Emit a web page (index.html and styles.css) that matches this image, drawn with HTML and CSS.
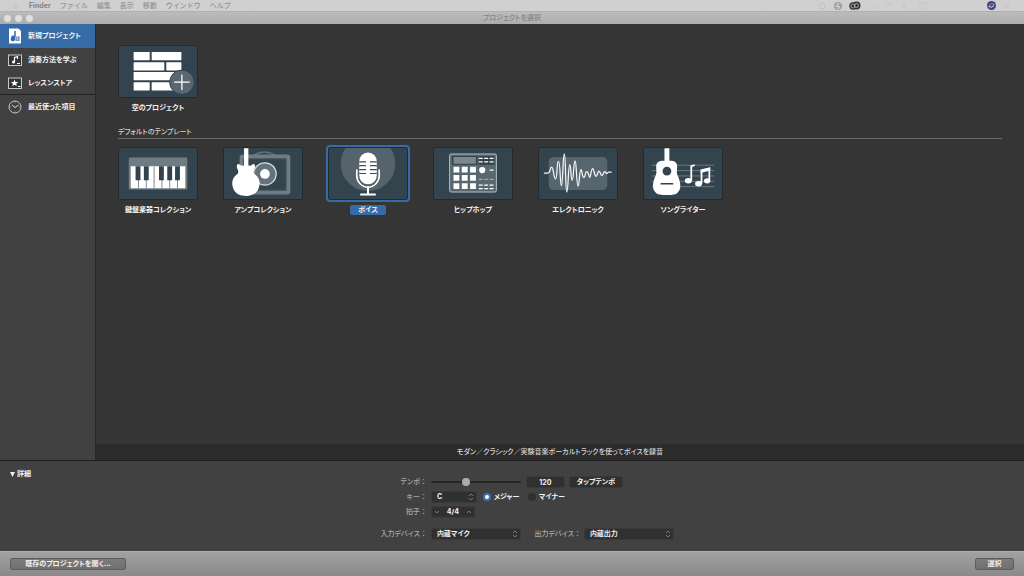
FILE: index.html
```html
<!DOCTYPE html>
<html lang="ja">
<head>
<meta charset="utf-8">
<title>プロジェクトを選択</title>
<link rel="stylesheet" href="styles.css">
</head>
<body>
<header class="menubar">
  <nav class="menus">
    <svg class="apple" viewBox="0 0 8 8"><path d="M4 2.4C2 1.5.8 3 1.2 5S3 7.800 4 7.100s2 .4 2.700-1.600C5.600 5 5.600 3.500 6.500 2.900 5.700 2 4.800 2.200 4 2.400zM4 2c0-1 .6-1.600 1.300-1.700C5.400 1.200 4.800 2 4 2z"/></svg>
    <b>Finder</b><span>ファイル</span><span>編集</span><span>表示</span><span>移動</span><span>ウインドウ</span><span>ヘルプ</span>
  </nav>
  <svg class="status" viewBox="0 0 200 11">
    <circle cx="8" cy="6" r="3" fill="none" stroke="#c2c2c2"/>
    <circle cx="24" cy="6" r="4" fill="#a2a2a2"/><path d="M24.500 3l-2 3.500h3L24 9" fill="none" stroke="#ddd"/>
    <circle cx="39" cy="6" r="3.700" fill="#333"/><circle cx="42.500" cy="5.500" r="4" fill="#333"/><circle cx="39" cy="6" r="2" fill="none" stroke="#bbb" stroke-width=".8"/><circle cx="42.500" cy="5.500" r="2" fill="none" stroke="#bbb" stroke-width=".8"/>
    <g fill="none" stroke="#c8c8c8"><path d="M58 3v6M62 3v6M71 4q3.500-2 7 0M72.500 6q2-1.500 4 0M91 4l-3 2 3 2z"/><rect x="105" y="3" width="7" height="6"/><path d="M124 6h3M129 6h4M136 6h3M141 6h3M158 4l4 4"/></g>
    <circle cx="177.500" cy="5.500" r="4.500" fill="#344b80"/><path d="M174.500 7q2-5 6-2" fill="none" stroke="#c3609f" stroke-width="1.200"/><path d="M175 6.500q3 2 5-1" fill="none" stroke="#cdf" stroke-width="1"/>
    <path d="M190 4h6M190 6h6M190 8h6" stroke="#cbc8c6"/>
  </svg>
</header>

<div class="titlebar">
  <div class="lights"><i></i><i></i><i></i></div>
  <h1>プロジェクトを選択</h1>
</div>

<div class="body">
  <aside class="sidebar">
    <button class="side selected">
      <svg viewBox="0 0 16 16"><path d="M2 .5h9.500L14 3v12.500H2z" fill="#fff"/><path d="M8 3v6" stroke="#2f69a8" stroke-width="1.500"/><path d="M6.500 7.500C4 7 4.500 9.500 3.800 10.500S4.500 14 7 13s1.500-5-.5-5.500z" fill="#2f69a8"/><path d="M9 8.500h3.500V13H8.500z" fill="#5b8bc0"/><path d="M10.300 9v3.500" stroke="#fff" stroke-width=".7"/></svg>
      新規プロジェクト</button>
    <button class="side">
      <svg viewBox="0 0 16 16"><rect x="1.500" y="3" width="13" height="10.500" fill="#353535" stroke="#c8c8c8"/><path d="M7.500 10V5.500l3-1V7" fill="none" stroke="#fff" stroke-width="1.200"/><circle cx="6.500" cy="10" r="1.500" fill="#fff"/><path d="M10 11.500h3" stroke="#fff"/></svg>
      演奏方法を学ぶ</button>
    <button class="side">
      <svg viewBox="0 0 16 16"><rect x="1.500" y="3" width="13" height="10.500" fill="#353535" stroke="#c8c8c8"/><path d="M7.500 4.500l1 2.500 2.700.1-2.100 1.600.8 2.600-2.400-1.500-2.300 1.500.8-2.600-2.100-1.600L6.600 7z" fill="#fff"/><path d="M11 11.500h2.500" stroke="#fff"/></svg>
      レッスンストア</button>
    <button class="side recent">
      <svg viewBox="0 0 16 16"><circle cx="8" cy="8" r="6" fill="none" stroke="#c8c8c8"/><path d="M5 6l3 2.500L11.500 6" fill="none" stroke="#ddd"/><path d="M8 2.500v1M8 12.500v1M2.500 8h1M12.500 8h1" stroke="#aaa"/></svg>
      最近使った項目</button>
  </aside>

  <main class="content">
    <div class="chooser">
      <div class="tiles">
        <button class="tile">
          <svg viewBox="0 0 80 52"><g fill="#fff"><rect x="15" y="6" width="16.500" height="8.500" rx=".5"/><rect x="33.500" y="6" width="30.500" height="8.500" rx=".5"/><rect x="15" y="16.500" width="31.500" height="8.500" rx=".5"/><rect x="48.500" y="16.500" width="15.500" height="8.500" rx=".5"/><rect x="15" y="26.500" width="49" height="8.500" rx=".5"/><rect x="15" y="37" width="16.500" height="8.500" rx=".5"/><rect x="33.500" y="37" width="25" height="8.500" rx=".5"/></g><circle cx="64.500" cy="37" r="12.500" fill="#596870" stroke="#34434d"/><path d="M56.500 37h16M64.500 29v16" stroke="#fff" stroke-width="1.300"/></svg>
          <span>空のプロジェクト</span></button>
      </div>
      <h2>デフォルトのテンプレート</h2>
      <div class="tiles">
        <button class="tile">
          <svg viewBox="0 0 80 52"><rect x="10" y="9.500" width="60" height="33" rx="1.500" fill="#6f7c83"/><path d="M12 18.500h56V41H12z" fill="#fff"/><path d="M20 19v22M28 19v22M36 19v22M44 19v22M52 19v22M60 19v22" stroke="#5c6b74" stroke-width=".8"/><path d="M17 18.500h5V33h-5zM25.500 18.500h5V33h-5zM41 18.500h5V33h-5zM49.500 18.500h5V33h-5zM57.500 18.500h5V33h-5z" fill="#33434d"/></svg>
          <span>鍵盤楽器コレクション</span></button>
        <button class="tile">
          <svg viewBox="0 0 80 52"><path d="M31 7q10-6 21 0" fill="none" stroke="#61717b" stroke-width="1.500"/><rect x="18" y="8.500" width="48" height="37" rx="1" fill="none" stroke="#6e7c84" stroke-width="4"/><rect x="20.500" y="11" width="43" height="32" fill="none" stroke="#46565f"/><circle cx="42" cy="26.500" r="11.500" fill="#63727b" stroke="#d4dade" stroke-width="1.300"/><circle cx="42" cy="26.500" r="5" fill="#fff"/><path d="M20.500 0h4.500v17c0 2 3 1 4.500-.5 2-1 3 2 2 4-1.500 3-2 5 1 7 5 3.500 5 11 2 16-2.500 4-7 5.500-12 5.500s-9.500-1.500-12-5.500c-3-5-3-12.500 2-16 3-2 2.500-4 1-7-1-2 0-5 2-4 2 1.500 5 2.500 5 .5z" fill="#fff"/></svg>
          <span>アンプコレクション</span></button>
        <button class="tile chosen">
          <svg viewBox="0 0 80 52"><circle cx="40" cy="16" r="28" fill="#56636b"/><path d="M28.500 22v6a11.500 12 0 0 0 23 0v-6" fill="none" stroke="#fff" stroke-width="1.700"/><rect x="31" y="4.500" width="18" height="32.500" rx="9" fill="#fff"/><path d="M31 14h7M31 18h7M31 22h7M31 26h7M42 14h7M42 18h7M42 22h7M42 26h7" stroke="#3a4a54" stroke-width="1.200"/><path d="M40 40v7M32 47.500h16" stroke="#fff" stroke-width="2"/></svg>
          <span>ボイス</span></button>
        <button class="tile">
          <svg viewBox="0 0 80 52"><rect x="16" y="6" width="48" height="39" rx="1.500" fill="#596870" stroke="#b8c0c4"/><path d="M18.500 8h26v9h-26zM46 8h16v9H46z" fill="#33434d"/><path d="M20 9h23v7H20z" fill="#7b888f"/><path d="M20 19h6v6h-6zM28.500 19h6v6h-6zM37 19h6v6h-6zM20 27.500h6v6h-6zM28.500 27.500h6v6h-6zM37 27.500h6v6h-6zM20 36h6v6h-6zM28.500 36h6v6h-6zM37 36h6v6h-6z" fill="#fff"/><circle cx="49.500" cy="22.500" r="3.200" fill="#fff"/><path d="M57 22.500h4M46 10.500h4M51.500 10.500h4M57 10.500h4M46 14h4M51.500 14h4M57 14h4M46 38h4M51.500 38h4M57 38h4M46 41.500h4M51.500 41.500h4M57 41.500h4" stroke="#fff" stroke-width="1.300"/><path d="M46 32h4M51.500 32h4M57 32h4" stroke="#9ca7ad" stroke-width="1.200"/></svg>
          <span>ヒップホップ</span></button>
        <button class="tile">
          <svg viewBox="0 0 80 52"><rect x="10" y="9" width="60" height="34" rx="5" fill="#56656e"/><path d="M5 25.500h4c3 0 2-6 4-6s2 12 4 12 1-18 3-18 1.500 25 3 25S24.500 6 26 6s1 39 2.500 39S30 17 31.500 17s1 16 2.500 16 1.500-20 3-20 1.500 26 3 26 1.500-17 3-17 1 8 3 8 1-6 3-6 2 6 3 6 1.500-9 3-9 2 8 3.500 8 1.500-5.500 3-5.500 1.500 4.500 3 4.500 1.500-4 3-4 1 2 2 2 1-1.500 2-1.500h3" fill="none" stroke="#f4f6f7" stroke-width="1.300"/></svg>
          <span>エレクトロニック</span></button>
        <button class="tile">
          <svg viewBox="0 0 80 52"><path d="M8 17.500h64M8 23h64M8 28.500h64M8 34h64M8 39.500h64" stroke="#71808a" stroke-width=".9"/><path d="M21 0h5v13c6 0 8 2 8 6 0 5-1 6 1 10 3 7 3 13 0 16-2 3-6 3-11.500 3s-10 0-12-3c-3-3-3-9 0-16 2-4 1-5 1-10 0-4 2-6 8.500-6z" fill="#fff"/><circle cx="23.500" cy="23.500" r="4.500" fill="#34434d"/><path d="M17 36.500h13" stroke="#34434d" stroke-width="1.500"/><path d="M48.500 33V18.500l3.500-1M59 36V23l8-2v12" fill="none" stroke="#fff" stroke-width="1.800"/><path d="M58.100 22l9.800-2.500v3.500l-9.800 2.500z" fill="#fff"/><g fill="#fff"><ellipse cx="45.500" cy="33.500" rx="3.600" ry="2.800"/><ellipse cx="56" cy="36.500" rx="3.600" ry="2.800"/><ellipse cx="64.800" cy="33.500" rx="3.300" ry="2.700"/></g></svg>
          <span>ソングライター</span></button>
      </div>
    </div>
    <p class="caption">モダン／クラシック／実験音楽ボーカルトラックを使ってボイスを録音</p>
  </main>
</div>

<section class="details">
  <button class="disclosure"><svg viewBox="0 0 6 6"><path d="M0 0h6L3 6z" fill="#eee"/></svg>詳細</button>
  <form class="form">
    <label for="tempo">テンポ<span class="colon">：</span></label>
    <div class="row">
      <input id="tempo" class="slider" type="range" min="0" max="100" value="38">
      <input class="number" type="text" value="120" aria-label="テンポ値">
      <button type="button" class="btn">タップテンポ</button>
    </div>
    <label for="key">キー<span class="colon">：</span></label>
    <div class="row">
      <div class="pick key"><select id="key"><option>C</option></select><svg viewBox="0 0 6 8"><path d="M1 3l2-2 2 2M1 5l2 2 2-2"/></svg></div>
      <label class="radio"><input type="radio" name="mode" checked>メジャー</label>
      <label class="radio"><input type="radio" name="mode">マイナー</label>
    </div>
    <label for="meter">拍子<span class="colon">：</span></label>
    <div class="row">
      <div class="stepper">
        <button type="button" aria-label="前"><svg viewBox="0 0 6 8"><path d="M1 3l2 2 2-2"/></svg></button>
        <input id="meter" type="text" value="4/4">
        <button type="button" aria-label="次"><svg viewBox="0 0 6 8"><path d="M1 5l2-2 2 2"/></svg></button>
      </div>
    </div>
    <label for="in" class="device">入力デバイス<span class="colon">：</span></label>
    <div class="row device">
      <div class="pick"><select id="in"><option>内蔵マイク</option></select><svg viewBox="0 0 6 8"><path d="M1 3l2-2 2 2M1 5l2 2 2-2"/></svg></div>
      <label for="out" class="outlabel">出力デバイス<span class="colon">：</span></label>
      <div class="pick"><select id="out"><option>内蔵出力</option></select><svg viewBox="0 0 6 8"><path d="M1 3l2-2 2 2M1 5l2 2 2-2"/></svg></div>
    </div>
  </form>
</section>

<footer class="footer">
  <button class="open">既存のプロジェクトを開く...</button>
  <button class="choose">選択</button>
</footer>
</body>
</html>
```

FILE: styles.css
```css
* { box-sizing: border-box; }

body {
  margin: 0;
  min-height: 100vh;
  display: flex;
  flex-direction: column;
  background: #353535;
  color: #f2f2f2;
  font: 500 7px/10px Inter, "Noto Sans CJK JP", sans-serif;
  font-feature-settings: "palt";
}

button, input, select {
  margin: 0;
  padding: 0;
  border: 0;
  background: none;
  color: inherit;
  font: inherit;
  font-feature-settings: inherit;
}

svg { display: block; flex: none; }

.menubar {
  display: flex;
  justify-content: space-between;
  height: 11px;
  background: #d0d0d0;
  color: #959595;
  line-height: 11px;
  font-feature-settings: normal;
}
.menus { display: flex; gap: 9px; padding-left: 12px; }
.menus b { color: #858585; }
.apple { width: 8px; height: 8px; margin-top: 2px; fill: #c8c8c8; }
.status { width: 200px; height: 11px; margin-right: 10px; }

.titlebar {
  display: grid;
  grid-template-columns: 1fr auto 1fr;
  align-items: center;
  height: 13px;
  border-top: 1px solid #aeb1b2;
  background: linear-gradient(#bbbdbd, #acacac);
}
.lights { display: flex; gap: 4px; padding-left: 4px; }
.lights i { width: 7px; height: 7px; border-radius: 50%; background: #dfdfdf; }
.titlebar h1 { margin: 0; color: #858585; font-size: 7px; font-weight: 500; }

.body { flex: 1; display: flex; }
.sidebar {
  width: 96px;
  flex: none;
  background: #414141;
  border-right: 1px solid #282828;
}
.side {
  display: flex;
  align-items: center;
  gap: 5px;
  width: 100%;
  height: 23px;
  padding-left: 7px;
  font-weight: 700;
  white-space: nowrap;
}
.side svg { width: 16px; height: 16px; }
.side.selected { height: 24px; background: #356ca8; }
.recent { height: 24px; border-top: 1px solid #222; }

.content { flex: 1; display: flex; flex-direction: column; }
.chooser { flex: 1; padding: 21px 22px 0; }
.tiles { display: flex; flex-wrap: wrap; gap: 25px; }
.tile {
  display: flex;
  flex-direction: column;
  align-items: center;
  gap: 5px;
  width: 80px;
  font-weight: 700;
  white-space: nowrap;
}
.tile svg {
  width: 80px;
  height: 53px;
  background: #34444e;
  border: 1px solid #242b30;
  border-radius: 2px;
}
.tile span { padding: 0 8px; border-radius: 2px; }
.chosen svg { outline: 2px solid #356ca8; }
.chosen span { background: #356ca8; }
.chooser h2 {
  margin: 14px 0 8px;
  padding-bottom: 1px;
  border-bottom: 1px solid #6c6c6c;
  color: #d0d0d0;
  font-size: 7px;
  font-weight: 500;
}
.caption {
  margin: 0;
  padding: 3px 0;
  background: #2b2b2b;
  color: #d8d8d8;
  text-align: center;
  font-weight: 500;
}

.details {
  position: relative;
  height: 91px;
  border-top: 1px solid #1d1d1d;
  background: #414141;
}
.disclosure {
  position: absolute;
  left: 10px;
  top: 8px;
  display: flex;
  align-items: center;
  gap: 2px;
  font-weight: 700;
}
.disclosure svg { width: 5px; height: 5px; }
.form {
  display: grid;
  grid-template-columns: 48px auto;
  justify-content: start;
  align-items: center;
  gap: 3px 4px;
  margin-left: 37%;
  padding-top: 15px;
}
.form > label, .outlabel { color: #a8a8a8; text-align: right; white-space: nowrap; }
.colon { font-feature-settings: normal; }
.row { display: flex; align-items: center; font-weight: 700; }
.form > .device { margin-top: 7px; }
.slider {
  appearance: none;
  width: 90px;
  height: 12px;
  margin-right: 5px;
}
.slider::-webkit-slider-runnable-track { height: 2px; background: #262626; border-radius: 1px; }
.slider::-webkit-slider-thumb {
  appearance: none;
  width: 8px;
  height: 8px;
  margin-top: -3px;
  border-radius: 50%;
  background: #adadad;
}
.number, .btn, .pick, .stepper {
  height: 12px;
  background: #303030;
  border: 1px solid #3a3a3a;
  border-radius: 2px;
}
.number { width: 39px; margin-right: 4px; text-align: center; }
.btn { width: 54px; }
.pick { display: flex; align-items: center; width: 90px; padding-right: 2px; }
.pick.key { width: 46px; margin-right: 6px; }
.pick select { appearance: none; flex: 1; min-width: 0; padding-left: 5px; }
.pick svg, .stepper svg { width: 6px; height: 8px; fill: none; stroke: #777; }
.radio { display: flex; align-items: center; gap: 3px; width: 45px; white-space: nowrap; }
.radio input {
  appearance: none;
  width: 8px;
  height: 8px;
  border-radius: 50%;
  background: #303030;
}
.radio input:checked { background: #fff; border: 2px solid #3973b2; }
.stepper { display: flex; align-items: center; width: 44px; padding: 0 2px; }
.stepper input { flex: 1; min-width: 0; text-align: center; }
.outlabel { width: 60px; margin-right: 3px; font-weight: 500; }

.footer {
  display: flex;
  align-items: center;
  justify-content: space-between;
  height: 25px;
  padding: 0 10px;
  border-top: 1px solid #adadad;
  background: linear-gradient(#a2a2a2, #898989);
}
.footer button {
  height: 12px;
  border: 1px solid #5c5c5c;
  border-radius: 2px;
  background: linear-gradient(#7b7b7b, #707070);
  font-weight: 700;
}
.open { width: 116px; }
.choose { width: 39px; }
```
